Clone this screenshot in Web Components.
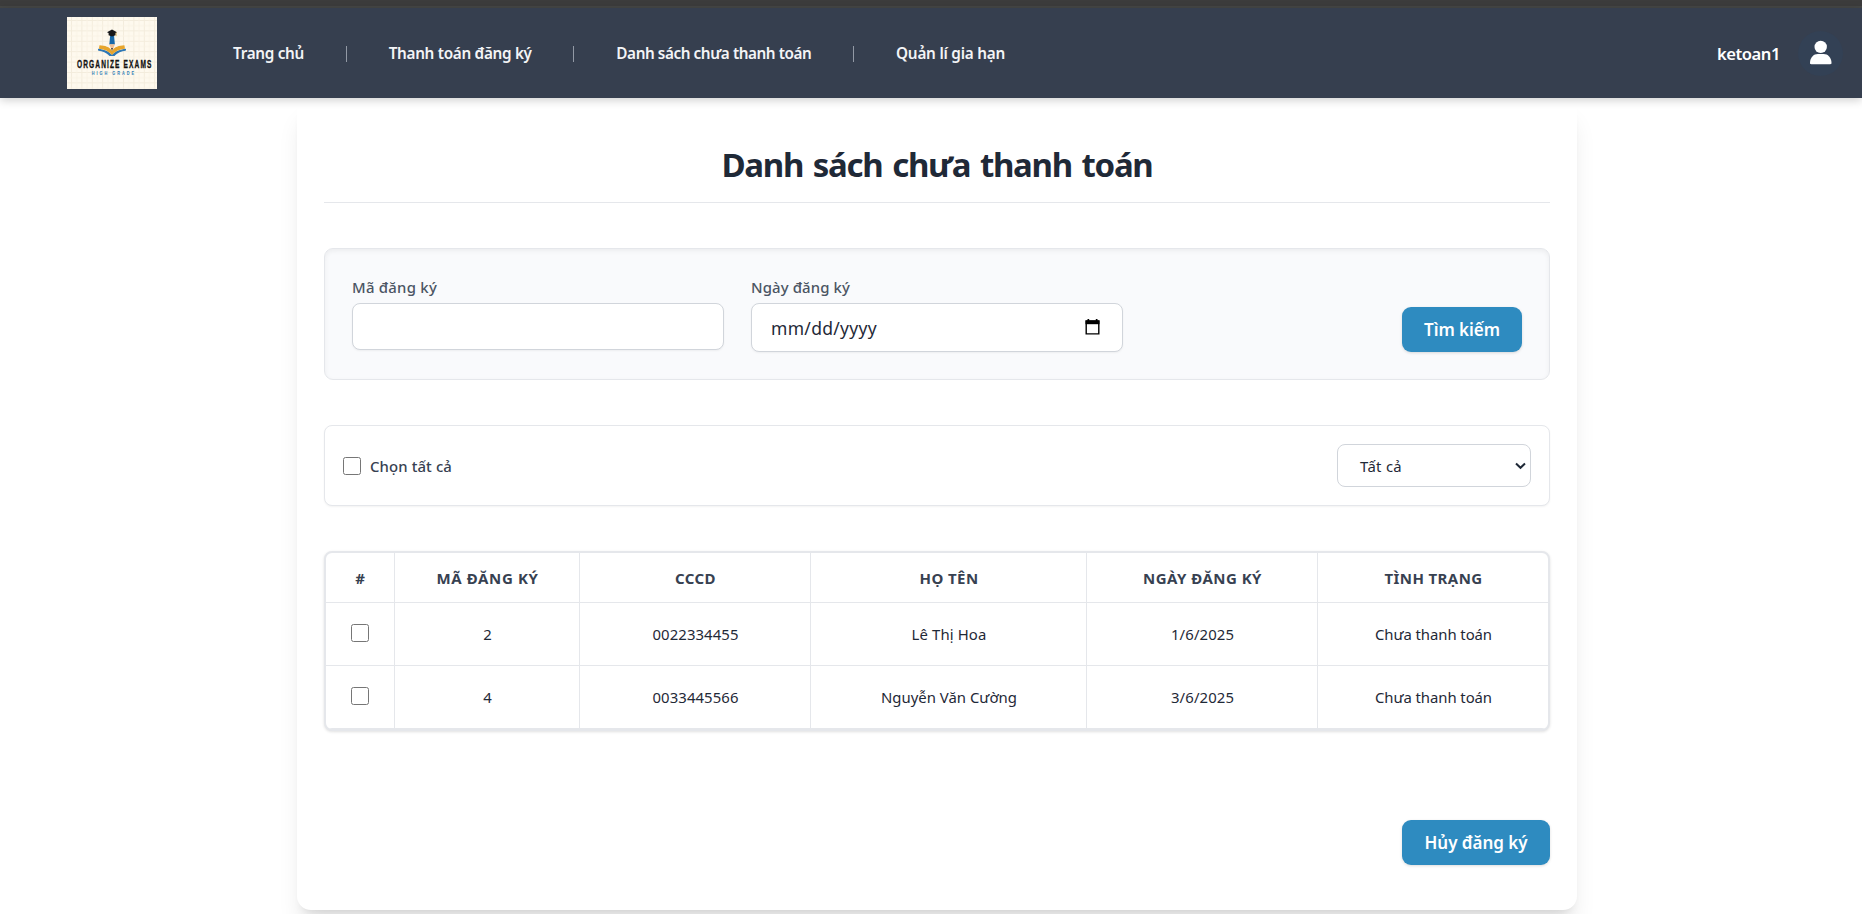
<!DOCTYPE html>
<html lang="vi">
<head>
<meta charset="utf-8">
<title>Danh sách chưa thanh toán</title>
<style>
html{height:100%;overflow:hidden}
body{margin:0;height:100%;overflow:hidden;background:#fff;color:#1f2937;font-family:"Noto Sans","Open Sans",sans-serif;font-size:14.9px}
</style>
</head>
<body>
<exam-page></exam-page>
<script>
const define = (name, html, setup) => {
  const tpl = document.createElement('template');
  tpl.innerHTML = html;
  customElements.define(name, class extends HTMLElement {
    connectedCallback() {
      if (this.shadowRoot) return;
      this.attachShadow({ mode: 'open' }).append(tpl.content.cloneNode(true));
      if (setup) setup(this, this.shadowRoot);
    }
  });
};

/* A single line of text tracked to a given width. */
define('ui-text', `<style>:host{display:inline-block;white-space:nowrap}</style><slot></slot>`, el => {
  const w = parseFloat(el.getAttribute('w'));
  if (!w) return;
  const n = [...el.textContent.normalize('NFC')].length;
  const d = w - el.getBoundingClientRect().width;
  el.style.letterSpacing = (d / n).toFixed(3) + 'px';
});

define('ui-check', `<style>
:host{display:block;width:18px;height:18px}
input{display:block;width:18px;height:18px;margin:0}
</style><input type="checkbox">`);

define('ui-button', `<style>
:host{display:flex;box-sizing:border-box;height:45px}
button{all:unset;display:flex;align-items:center;justify-content:center;width:100%;background:#2e8bc0;color:#fff;border-radius:9px;font-weight:600;font-size:17px;line-height:24px;box-shadow:0 1px 3px rgba(0,0,0,.14);white-space:nowrap}
</style><button><slot></slot></button>`);

define('exam-logo', `<style>:host{display:block;width:90px;height:72px}svg{display:block}</style>
<svg width="90" height="72" viewBox="0 0 90 72">
<defs><pattern id="g" width="10.4" height="10.4" patternUnits="userSpaceOnUse" x="4" y="3"><path d="M.5 0V10.4M0 .5H10.4" stroke="#f3ecdc" stroke-width="1"/><path d="M5.7 0V10.4M0 5.7H10.4" stroke="#f9f3e5" stroke-width="1"/></pattern></defs>
<rect width="90" height="72" fill="#fef9ee"/><rect width="90" height="72" fill="url(#g)"/>
<path d="M43.200 18h3.800l.9 9.500h-5.600z" fill="#1769aa"/>
<path d="M42.300 27.200h5.600l-2 5h-1.600z" fill="#efbf94"/>
<path d="M40 15.200l5-2.600 5 2.600-1.400.9v2.100l-3.600 1.400-3.400-1.400v-2.100z" fill="#17181a"/>
<path d="M49.200 15.500v3.600" stroke="#d9a83c" stroke-width=".7"/>
<path d="M31 31.800c6 .8 10 2 14 6 4-4 8-5.200 14-6v1.700c-5 1-8 2-11.500 5.600h-5C39 35.500 36 34.500 31 33.500z" fill="#2f78b5"/>
<path d="M32.500 28.300c5.800.2 9.800 1.600 12.500 5.600 2.700-4 6.700-5.400 12.400-5.600l.6 3.500c-6 .7-9.300 2.200-13 6.200-3.700-4-7-5.500-13.100-6.200z" fill="#e7a52c"/>
<path d="M44 31h2l-1 3.200z" fill="#4b4438"/>
<g transform="translate(10 51.300) scale(.62 1)"><text font-family="Liberation Sans, sans-serif" font-weight="700" font-size="10.600" fill="#111" stroke="#111" stroke-width=".3" textLength="120" lengthAdjust="spacing">ORGANIZE EXAMS</text></g>
<g transform="translate(24.800 58) scale(.62 1)"><text font-family="Liberation Sans, sans-serif" font-weight="700" font-size="6.200" fill="#2f7cb8" textLength="68" lengthAdjust="spacing">HIGH GRADE</text></g>
</svg>`);

define('site-header', `<style>
:host{display:flex;align-items:center;box-sizing:border-box;height:90px;padding:0 19px 0 67px;background:#363f4f;color:#fff;box-shadow:0 2px 9px rgba(0,0,0,.2);position:relative}
exam-logo{margin-right:76px}
nav{display:flex;align-items:center;font-weight:600;font-size:15.300px;color:#f3f4f6}
i{width:1px;height:16px;background:#9299a5;margin:2px 42px 0 41.700px}
.user{margin-left:auto;display:flex;align-items:center;font-weight:600;font-size:16.600px}
.avatar{width:45px;height:45px;border-radius:50%;background:#334155;margin-left:18px;display:flex}
</style>
<exam-logo></exam-logo>
<nav><ui-text w="71">Trang chủ</ui-text><i></i><ui-text w="143">Thanh toán đăng ký</ui-text><i></i><ui-text w="195">Danh sách chưa thanh toán</ui-text><i></i><ui-text w="109">Quản lí gia hạn</ui-text></nav>
<div class="user"><ui-text w="63">ketoan1</ui-text><span class="avatar"><svg width="45" height="45" viewBox="0 0 45 45"><circle cx="22.700" cy="15.900" r="6.200" fill="#fff"/><path d="M12 32c0-5.500 3.800-8.900 7.800-8.900h5.900c4 0 7.800 3.400 7.800 8.900 0 .8-.5 1.200-1.300 1.200H13.300c-.8 0-1.300-.4-1.300-1.200z" fill="#fff"/></svg></span></div>`);

define('search-panel', `<style>
:host{display:flex;align-items:flex-end;box-sizing:border-box;height:132px;padding:0 27px;border:1px solid #e5e7eb;border-radius:9px;background:#f9fafc;box-shadow:inset 0 2px 5px rgba(0,0,0,.055)}
.field{width:372px;height:103px;margin-right:27px;box-sizing:border-box;align-self:flex-end}
.label{display:block;height:22px;line-height:22px;margin:0 0 5px;font-weight:500;color:#4b5563}
.box{display:flex;align-items:center;box-sizing:border-box;height:47px;border:1px solid #d1d5db;border-radius:8px;background:#fff;box-shadow:0 1px 2px rgba(0,0,0,.05);padding:0 22px 0 19px;font-size:17.500px}
.date{height:49px}
.date svg{margin-left:auto;margin-top:-1px}
ui-button{width:120px;margin:0 0 27px auto}
</style>
<div class="field"><span class="label"><ui-text w="85">Mã đăng ký</ui-text></span><div class="box"></div></div>
<div class="field"><span class="label"><ui-text w="99">Ngày đăng ký</ui-text></span><div class="box date"><ui-text w="106">mm/dd/yyyy</ui-text>
<svg width="15" height="16" viewBox="0 0 15 16"><path d="M.5 1.500h14v3.700H.5z"/><path d="M1.200 2h12.600v12.900H1.200z" fill="none" stroke="#000" stroke-width="1.400"/><path d="M2.500 0h1.700v2H2.500zM10.800 0h1.700v2h-1.700z"/></svg></div></div>
<ui-button><ui-text w="76">Tìm kiếm</ui-text></ui-button>`);

define('filter-bar', `<style>
:host{display:flex;align-items:center;box-sizing:border-box;height:81px;padding:0 18px;border:1px solid #e5e7eb;border-radius:8px;background:#fff;box-shadow:0 1px 2px rgba(0,0,0,.05)}
label{display:flex;align-items:center;gap:9px;font-weight:500;color:#374151}
.select{display:flex;align-items:center;justify-content:space-between;box-sizing:border-box;width:194px;height:43px;margin-left:auto;padding:1px 4px 0 22px;border:1px solid #d1d5db;border-radius:8px;background:#fff}
.select svg{margin-top:-1px}
</style>
<label><ui-check></ui-check><ui-text w="82">Chọn tất cả</ui-text></label>
<div class="select"><ui-text w="42">Tất cả</ui-text><svg width="11" height="8" viewBox="0 0 11 8"><path d="M1 1.500l4.500 4.300L10 1.500" fill="none" stroke="#1f2937" stroke-width="2"/></svg></div>`);

define('reg-table', `<style>
:host{display:block;box-sizing:border-box;height:180px;border:2px solid #e5e7eb;border-radius:8px;background:#fff;box-shadow:0 1px 3px rgba(0,0,0,.12);overflow:hidden}
.row{display:grid;grid-template-columns:69px 185px 231px 276px 231px 230px;height:63px;box-sizing:border-box;border-bottom:1px solid #e5e7eb}
.row>*{display:flex;align-items:center;justify-content:center;border-right:1px solid #e5e7eb;padding-left:1px}
.row>:first-child{padding-left:0}
.row>:last-child{border-right:0}
.head{height:50px;font-weight:700;font-size:15px;color:#374151}
ui-check{margin-bottom:3px}
</style>
<div class="row head"><span><ui-text>#</ui-text></span><span><ui-text w="102">MÃ ĐĂNG KÝ</ui-text></span><span><ui-text w="41">CCCD</ui-text></span><span><ui-text w="59">HỌ TÊN</ui-text></span><span><ui-text w="119">NGÀY ĐĂNG KÝ</ui-text></span><span><ui-text w="98">TÌNH TRẠNG</ui-text></span></div>
<div class="row"><span><ui-check></ui-check></span><span>2</span><span><ui-text w="86">0022334455</ui-text></span><span><ui-text w="75">Lê Thị Hoa</ui-text></span><span><ui-text w="63">1/6/2025</ui-text></span><span><ui-text w="117">Chưa thanh toán</ui-text></span></div>
<div class="row"><span><ui-check></ui-check></span><span>4</span><span><ui-text w="86">0033445566</ui-text></span><span><ui-text w="136">Nguyễn Văn Cường</ui-text></span><span><ui-text w="63">3/6/2025</ui-text></span><span><ui-text w="117">Chưa thanh toán</ui-text></span></div>`);

define('page-card', `<style>
:host{display:block;box-sizing:border-box;width:1280px;height:812px;margin:0 0 0 297px;padding:24px 27px 0;background:#fff;border-radius:14px;box-shadow:0 20px 25px -5px rgba(0,0,0,.1),0 8px 10px -6px rgba(0,0,0,.1)}
h1{margin:0;height:81px;box-sizing:border-box;border-bottom:1px solid #e5e7eb;text-align:center;font-size:33px;line-height:85px;font-weight:700;word-spacing:2.500px}
search-panel{margin-top:45px}
filter-bar{margin-top:45px}
reg-table{margin-top:45px}
footer{display:flex;justify-content:flex-end;margin-top:89px}
footer ui-button{width:148px}
</style>
<h1><ui-text w="431">Danh sách chưa thanh toán</ui-text></h1>
<search-panel></search-panel><filter-bar></filter-bar><reg-table></reg-table>
<footer><ui-button><ui-text w="103">Hủy đăng ký</ui-text></ui-button></footer>`);

define('exam-page', `<style>
:host{display:block;height:914px;overflow:hidden}
.edge{height:6px;background:#3c3c3c;border-bottom:2px solid #454746}
site-header{z-index:1}
</style>
<div class="edge"></div><site-header></site-header><page-card></page-card>`);
</script>
</body>
</html>
